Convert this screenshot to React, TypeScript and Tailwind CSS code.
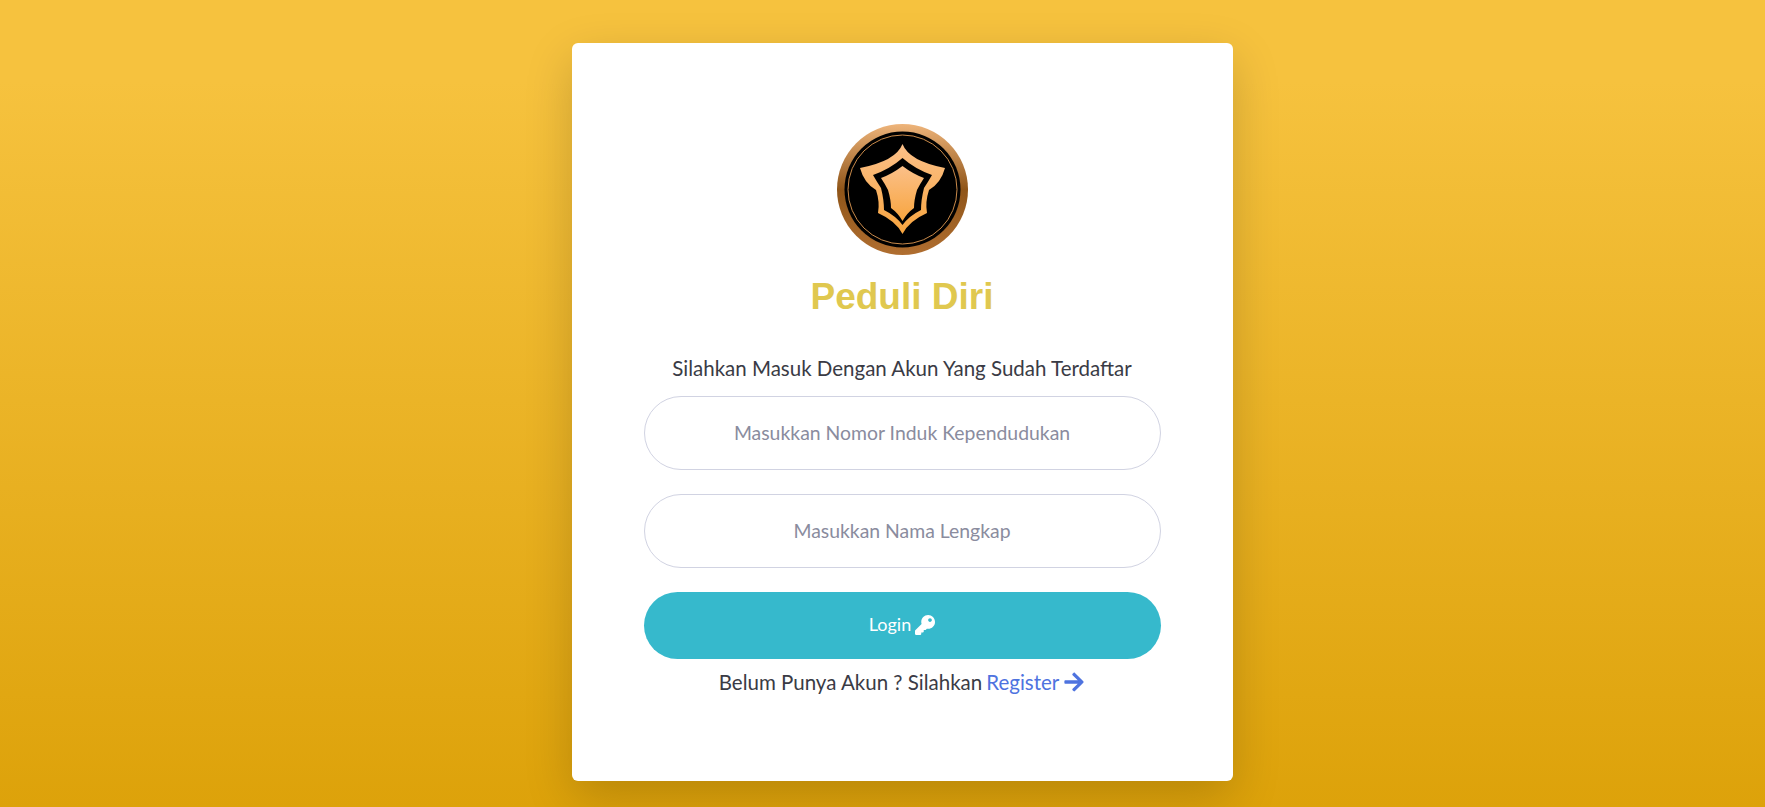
import { FaArrowRight, FaKey } from "react-icons/fa";

function Logo() {
  return (
    <svg viewBox="0 0 131 131" className="h-[131px] w-[131px]">
      <defs>
        <linearGradient id="ring" x1="0" y1="0" x2="0" y2="1">
          <stop offset="0" stopColor="#eeb47a" />
          <stop offset="0.5" stopColor="#8f5519" />
          <stop offset="1" stopColor="#b06e30" />
        </linearGradient>
        <linearGradient id="shield" x1="0" y1="0" x2="0" y2="1">
          <stop offset="0" stopColor="#fbc089" />
          <stop offset="1" stopColor="#f8a53f" />
        </linearGradient>
      </defs>
      <circle cx="65.5" cy="65.5" r="65.5" fill="url(#ring)" />
      <circle cx="65.5" cy="65.5" r="58" fill="#000" />
      <circle cx="65.5" cy="65.5" r="54.5" fill="none" stroke="#c98a4a" strokeWidth="1" />
      <path
        fill="url(#shield)"
        d="M65.5 20 Q72 37 108 44 Q104 59 92 66 Q88 78 90 89 Q72 97 65.5 110 Q59 97 41 89 Q43 78 39 66 Q27 59 23 44 Q59 37 65.5 20 Z"
      />
      <path
        fill="#000"
        d="M65.5 34 Q78 45 95 51 Q91 58 87 64 Q84 76 84 86 Q72 92 65.5 101 Q59 92 47 86 Q47 76 44 64 Q40 58 36 51 Q53 45 65.5 34 Z"
      />
      <path
        fill="url(#shield)"
        d="M65.5 42 Q76 50 87 54 Q83 60 80 66 Q77 76 77 84 Q70 89 65.5 97 Q61 89 54 84 Q54 76 51 66 Q48 60 44 54 Q55 50 65.5 42 Z"
      />
    </svg>
  );
}

export default function App() {
  return (
    <div className="flex h-[807px] justify-center overflow-hidden bg-[linear-gradient(180deg,#f6c23e_10%,#dda20a_100%)] pt-[43px] font-['Lato',sans-serif]">
      <div className="ml-[39px] flex h-[738px] w-[661px] flex-col items-center rounded-[6px] bg-white px-[72px] pt-[81px] shadow-[0_16px_48px_rgba(0,0,0,0.175)]">
        <Logo />
        <h1 className="mt-[18px] font-['Liberation_Sans',sans-serif] text-[37px] leading-[48px] font-bold text-[#e0c84f]">
          Peduli Diri
        </h1>
        <p className="mt-[32px] text-[20.5px] leading-[30px] text-[#3a3b45]">
          Silahkan Masuk Dengan Akun Yang Sudah Terdaftar
        </p>
        <input
          placeholder="Masukkan Nomor Induk Kependudukan"
          className="mt-[13px] h-[74px] w-full rounded-full border border-[#d1d3e2] bg-white px-6 pb-[2px] text-center font-['Lato',sans-serif] text-[19.4px] text-[#6e707e] outline-none placeholder:text-[#8a8c9e]"
        />
        <input
          placeholder="Masukkan Nama Lengkap"
          className="mt-[24px] h-[74px] w-full rounded-full border border-[#d1d3e2] bg-white px-6 pb-[2px] text-center font-['Lato',sans-serif] text-[19.4px] text-[#6e707e] outline-none placeholder:text-[#8a8c9e]"
        />
        <button className="mt-[24px] flex h-[67px] w-full items-center justify-center gap-1 rounded-full bg-[#36b9cc] pb-[2px] text-[18px] text-white">
          Login <FaKey className="h-[20px] w-[20px]" />
        </button>
        <p className="mt-[8px] flex items-center gap-[4px] text-[20.5px] leading-[30px] text-[#3a3b45]">
          Belum Punya Akun ? Silahkan
          <a href="#" className="flex items-center gap-1 text-[#4e73df]">
            Register <FaArrowRight className="h-[22px] w-[22px]" />
          </a>
        </p>
      </div>
    </div>
  );
}
